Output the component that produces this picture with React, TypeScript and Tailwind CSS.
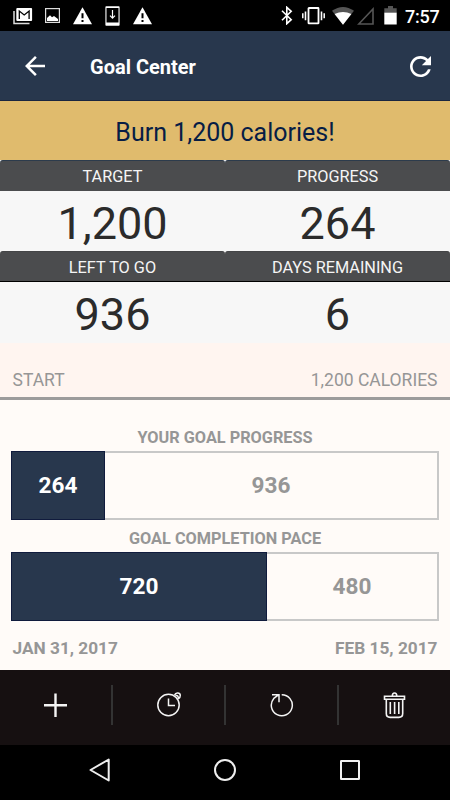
import React from 'react';

function Warning({ className }: { className: string }) {
  return (
    <svg className={`h-[18px] w-[19px] shrink-0 ${className}`} viewBox="0 0 19 18">
      <path d="M9.5 0.3 19 17.3H0Z" fill="#fff" />
      <path d="M8.5 6.3h2v5h-2zM8.5 12.9h2v2h-2z" fill="#000" />
    </svg>
  );
}

function StatusBar() {
  return (
    <div className="flex h-[31px] items-start bg-black pl-[13px] pr-[10px]">
      <svg className="mt-[7px] h-[18px] w-5 shrink-0" viewBox="0 0 20 18">
        <path d="M1 4v12.4h15.5" fill="none" stroke="#ddd" strokeWidth="1.5" />
        <rect x="3.3" y="1" width="15.8" height="13" rx="1" fill="#fff" />
        <path d="M6.3 12V4l4.9 4 4.9-4v8" fill="none" stroke="#000" strokeWidth="1.3" />
      </svg>
      <svg className="ml-3 mt-2 h-[15px] w-[15px] shrink-0" viewBox="0 0 15 15">
        <rect x="0.6" y="0.6" width="13.8" height="13.8" fill="none" stroke="#ddd" strokeWidth="1.2" />
        <path d="M2 13V10l3-2.8 2 2 2-1.2 4 3V13Z" fill="#fff" />
      </svg>
      <Warning className="ml-[13px] mt-[7px]" />
      <svg className="ml-[13px] mt-[6px] h-5 w-[15px] shrink-0" viewBox="0 0 15 20">
        <rect x="0.4" y="0.3" width="14.2" height="19.4" rx="0.8" fill="#fff" />
        <path d="M1.5 2h12v14.5h-12z" fill="#000" />
        <path d="M7.5 4v8M5 9.7l2.5 2.5L10 9.7" fill="none" stroke="#fff" strokeWidth="1.2" />
      </svg>
      <Warning className="ml-[13px] mt-[7px]" />
      <svg className="ml-auto mt-[6px] h-[19px] w-3 shrink-0" viewBox="0 0 12 19">
        <path d="m1 4.7 9.2 9-4.4 4V1.3l4.4 4L1 14.3" fill="none" stroke="#fff" strokeWidth="1.6" />
      </svg>
      <svg className="ml-[9px] mt-[7px] h-[18px] w-[23px] shrink-0" viewBox="0 0 23 18">
        <rect x="6.5" y="1" width="10" height="15.4" rx="0.5" fill="none" stroke="#fff" strokeWidth="1.8" />
        <path d="M3.5 4.5v8.7M19.5 4.5v8.7" stroke="#fff" strokeWidth="1.6" />
        <path d="M0.8 6.3v5M22.2 6.3v5" stroke="#fff" strokeWidth="1.5" />
      </svg>
      <svg className="ml-[7px] mt-[7px] h-[18px] w-[22px] shrink-0" viewBox="0 0 22 18">
        <path d="M11 17.7 0 3.8Q11-3.8 22 3.8Z" fill="#555" />
        <path d="M11 17.7 2.6 7Q11 3 19.4 7Z" fill="#fff" />
      </svg>
      <svg className="ml-[3px] mt-[7px] h-[18px] w-[18px] shrink-0" viewBox="0 0 18 18">
        <path d="M1.8 17 16 2v15Z" fill="none" stroke="#555" strokeWidth="1.6" />
      </svg>
      <svg className="ml-[9px] mt-[6px] h-[19px] w-[13px] shrink-0" viewBox="0 0 13 19">
        <path d="M0.3 7V2.2H4V0h5v2.2h3.7V7Z" fill="#555" />
        <path d="M0.3 6.7h12.4v11.8H0.3Z" fill="#fff" />
      </svg>
      <span className="ml-[8px] mt-[6px] w-[35px] whitespace-nowrap text-[18px] font-medium leading-[21px] tracking-[-0.25px]">7:57</span>
    </div>
  );
}

function Header() {
  return (
    <header className="flex h-[70px] items-center border-b border-[#192540] bg-[#28374d] pl-[25px] pr-[19px]">
      <svg className="mt-px h-5 w-5" viewBox="4 4 16 16" fill="#fff">
        <path d="M20 11H7.83l5.59-5.59L12 4l-8 8 8 8 1.41-1.41L7.83 13H20v-2z" />
      </svg>
      <h1 className="ml-[45px] mt-[3px] text-[20px] font-bold leading-6">Goal Center</h1>
      <svg className="ml-auto mt-px h-[21px] w-[21px]" viewBox="4 4 16 16" fill="#fff">
        <path d="M17.65 6.35C16.2 4.9 14.21 4 12 4c-4.42 0-7.99 3.58-7.99 8s3.57 8 7.99 8c3.73 0 6.84-2.55 7.73-6h-2.08c-.82 2.33-3.04 4-5.65 4-3.31 0-6-2.69-6-6s2.69-6 6-6c1.66 0 3.14.69 4.22 1.78L13 11h7V4l-2.35 2.35z" />
      </svg>
    </header>
  );
}

function Stat({ label, value, lower = false }: { label: string; value: string; lower?: boolean }) {
  return (
    <div className={`flex flex-col ${lower ? 'h-[92px]' : 'h-[91px]'}`}>
      <div
        className={`h-[31px] shrink-0 rounded-t-[3px] border-t bg-[#4b4c4e] text-center text-[16.3px] leading-[31px] text-[#f5f5f5] ${
          lower ? 'border-t-[#444547] border-b border-b-black' : 'border-t-[#2c3b4c]'
        }`}
      >
        {label}
      </div>
      <div className="min-h-0 flex-1 overflow-hidden bg-[#f7f7f7] text-center text-[45px] leading-[66px] text-[#2b2b2b]">{value}</div>
    </div>
  );
}

function Bar({ done, left, className }: { done: string; left: string; className: string }) {
  return (
    <div className="flex h-[69px] text-center text-[22.6px] font-bold leading-[67px]">
      <div className={`border border-[#101b3d] bg-[#28374d] ${className}`}>{done}</div>
      <div className="flex-1 border-2 border-l-0 border-[#c8c8c8] leading-[65px] text-[#969696]">{left}</div>
    </div>
  );
}

function Toolbar() {
  return (
    <div className="grid h-[75px] grid-cols-4 bg-[#161011]">
      <div className="flex items-center justify-center pb-[5px]">
        <svg className="h-6 w-6" viewBox="0 0 24 24" stroke="#f4f4f4" strokeWidth="2.4">
          <path d="M11.5 0.5v23.5M0 12.2h23" />
        </svg>
      </div>
      <div className="flex items-center">
        <i className="-ml-[1.5px] mb-[5px] h-10 w-[2px] bg-[#333]" />
        <svg className="mb-[7px] ml-[44px] h-[26px] w-[26px]" viewBox="0 0 26 26" fill="none" stroke="#f4f4f4" strokeWidth="1.5">
          <circle cx="11.5" cy="14" r="10.7" />
          <path d="M11.5 7.5v7H18" />
          <path d="M17.5 4.2c1.1-3.2 5.6-2.8 5.8.2.1 1.6-.6 2.6-2.1 3.6M18.5 4.7c2.1-.8 3.4 1.1 2.5 3" strokeWidth="1.5" />
        </svg>
      </div>
      <div className="flex items-center">
        <i className="-ml-px mb-[5px] h-10 w-[2px] bg-[#333]" />
        <svg className="mb-[6px] ml-[44px] h-6 w-6" viewBox="0 0 24 24" fill="none" stroke="#f4f4f4" strokeWidth="1.5">
          <path d="M11.7 1.7A10.5 10.5 0 1 1 3.8 5.4L8.8 1.6M2 1.8h7v7.4" />
        </svg>
      </div>
      <div className="flex items-center">
        <i className="-ml-[0.5px] mb-[5px] h-10 w-[2px] bg-[#333]" />
        <svg className="mb-[5px] ml-[44px] h-[27px] w-[24px]" viewBox="0 0 24 27" fill="none" stroke="#f4f4f4" strokeWidth="1.6">
          <path d="M1.5 4.2h20v3h-20zM9.3 4c0-4 4.5-4 4.5 0M3.3 7.2v14.4q0 3.8 3.8 3.8h8.8q3.8 0 3.8-3.8V7.2M7.3 10v12M11.6 10v12M15.8 10v12" />
        </svg>
      </div>
    </div>
  );
}

export default function App() {
  return (
    <main className="h-[800px] w-[450px] overflow-hidden bg-black font-['Roboto',sans-serif] text-white">
      <StatusBar />
      <Header />
      <div className="h-[59px] bg-[#e0bb6d] text-center text-[25px] leading-[63px] text-[#071d45]">Burn 1,200 calories!</div>
      <section className="grid grid-cols-2 bg-[#f7f7f7]">
        <Stat label="TARGET" value="1,200" />
        <Stat label="PROGRESS" value="264" />
        <Stat label="LEFT TO GO" value="936" lower />
        <Stat label="DAYS REMAINING" value="6" lower />
      </section>
      <div className="flex h-[57px] justify-between border-b-[3px] border-[#9c9b9b] bg-[#fff5f0] px-[12.5px] pt-[27px] text-[17.5px] leading-5 text-[#969696]">
        <span>START</span>
        <span>1,200 CALORIES</span>
      </div>
      <section className="h-[270px] bg-[#fffbf8] px-[11px] pt-[27px] text-[#969696]">
        <h2 className="h-6 text-center text-[16.3px] font-bold leading-[21px]">YOUR GOAL PROGRESS</h2>
        <div className="text-white">
          <Bar done="264" left="936" className="w-[94px]" />
        </div>
        <h2 className="mt-2 h-6 text-center text-[16.3px] font-bold leading-[21px]">GOAL COMPLETION PACE</h2>
        <div className="text-white">
          <Bar done="720" left="480" className="w-[256px]" />
        </div>
        <div className="mt-[17px] flex justify-between px-[1.5px] text-[17.25px] font-bold leading-5">
          <span>JAN 31, 2017</span>
          <span>FEB 15, 2017</span>
        </div>
      </section>
      <Toolbar />
      <nav className="flex h-[55px] items-center bg-black pb-[5px]">
        <svg className="ml-[89px] h-6 w-[22px]" viewBox="0 0 22 24" fill="none" stroke="#eee" strokeWidth="2" strokeLinejoin="round">
          <path d="M1.5 12 19.7 1.5v21Z" />
        </svg>
        <svg className="ml-[103px] h-6 w-[22px]" viewBox="0 0 22 24" fill="none" stroke="#eee" strokeWidth="2">
          <circle cx="11" cy="12" r="10" />
        </svg>
        <svg className="ml-[104px] h-5 w-5" viewBox="0 0 20 20" fill="none" stroke="#eee" strokeWidth="2">
          <rect x="1" y="1" width="18" height="18" rx="0.3" />
        </svg>
      </nav>
    </main>
  );
}
